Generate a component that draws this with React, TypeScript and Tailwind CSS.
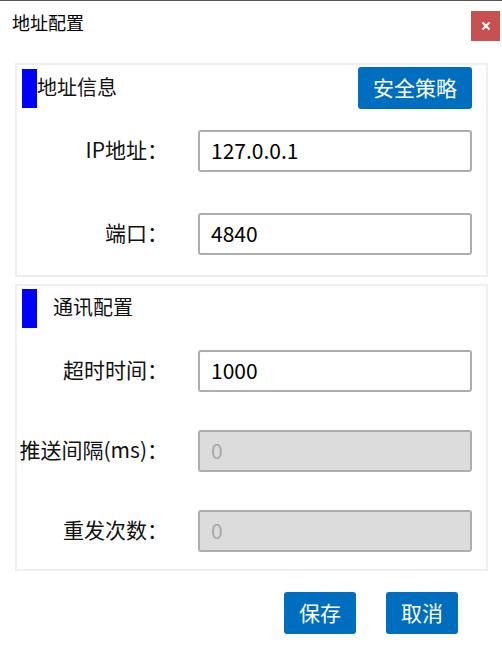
import { useState } from 'react'

const font = { fontFamily: '"Microsoft YaHei", "Noto Sans CJK SC", "Noto Sans", sans-serif' }

function Row({ label, value, disabled, onChange }: {
  label: string
  value: string
  disabled?: boolean
  onChange?: (v: string) => void
}) {
  return (
    <div className="flex items-center h-[42px]">
      <label className="w-[176px] shrink-0 flex justify-end pr-[30px] pb-[3px] text-[21px] leading-none text-[#111] whitespace-nowrap">
        {label}：
      </label>
      <input
        type="text"
        value={value}
        disabled={disabled}
        onChange={e => onChange?.(e.target.value)}
        className={
          disabled
            ? 'w-[274px] h-[42px] rounded-[3px] border-2 border-[#adadad] bg-[#dcdcdc] px-[11px] pb-[3px] text-[21px] text-[#a8a8a8] outline-none'
            : 'w-[274px] h-[42px] rounded-[3px] border-2 border-[#adadad] bg-white px-[11px] pb-[3px] text-[21px] text-black outline-none'
        }
        style={font}
      />
    </div>
  )
}

export default function App() {
  const [ip, setIp] = useState('127.0.0.1')
  const [port, setPort] = useState('4840')
  const [timeout, setTimeoutVal] = useState('1000')

  return (
    <div className="w-[502px] h-[663px] bg-white border-t border-[#555] flex flex-col" style={font}>
      <div className="flex items-start h-[62px]">
        <span className="pl-[12px] pt-[10px] text-[18px] leading-[22px] text-black">地址配置</span>
        <button className="ml-auto mr-[2px] mt-[10px] w-[29px] h-[30px] bg-[#c75050] flex items-center justify-center">
          <svg width="10" height="10" viewBox="0 0 10 10">
            <path d="M1.5 1.5 L8.5 8.5 M8.5 1.5 L1.5 8.5" stroke="white" strokeWidth="2" />
          </svg>
        </button>
      </div>

      <div className="ml-[15px] w-[473px] h-[214px] border-2 border-[#efefef] pl-[5px] pr-[14px] pt-[2px]">
        <div className="flex items-center">
          <div className="w-[15px] h-[39px] bg-[#0000ff]" />
          <span className="pb-[2px] text-[20px] leading-none text-[#111]">地址信息</span>
          <button className="ml-auto w-[114px] h-[42px] rounded-[3px] bg-[#006ebe] pb-[2px] text-white text-[21px] leading-none">
            安全策略
          </button>
        </div>
        <div className="mt-[21px] flex flex-col gap-[41px]">
          <Row label="IP地址" value={ip} onChange={setIp} />
          <Row label="端口" value={port} onChange={setPort} />
        </div>
      </div>

      <div className="ml-[15px] mt-[7px] w-[473px] h-[287px] border-2 border-[#efefef] pl-[5px] pr-[14px] pt-[3px]">
        <div className="flex items-center">
          <div className="w-[15px] h-[39px] bg-[#0000ff]" />
          <span className="ml-[16px] pb-[3px] text-[20px] leading-none text-[#111]">通讯配置</span>
        </div>
        <div className="mt-[22px] flex flex-col gap-[38px]">
          <Row label="超时时间" value={timeout} onChange={setTimeoutVal} />
          <Row label="推送间隔(ms)" value="0" disabled />
          <Row label="重发次数" value="0" disabled />
        </div>
      </div>

      <div className="flex justify-end gap-[30px] pr-[44px] mt-[21px]">
        <button className="w-[72px] h-[42px] rounded-[3px] bg-[#006ebe] pb-[2px] text-white text-[21px] leading-none">保存</button>
        <button className="w-[72px] h-[42px] rounded-[3px] bg-[#006ebe] pb-[2px] text-white text-[21px] leading-none">取消</button>
      </div>
    </div>
  )
}
